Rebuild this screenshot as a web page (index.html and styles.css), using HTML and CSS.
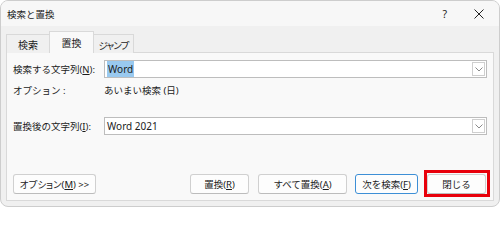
FILE: index.html
```html
<!DOCTYPE html>
<html lang="ja">
<head>
<meta charset="utf-8">
<title>検索と置換</title>
<link rel="stylesheet" href="styles.css">
</head>
<body>
<div class="window">
  <div class="titlebar">
    <span class="title">検索と置換</span>
    <span class="help">?</span>
    <span class="close">
      <svg width="10" height="10" viewBox="0 0 10 10"><path d="M0.5 0.5L9.5 9.5M9.5 0.5L0.5 9.5" stroke="#222" stroke-width="1" fill="none"/></svg>
    </span>
  </div>
  <div class="body">
    <div class="tabs">
      <div class="tab t1">検索</div>
      <div class="tab t2 active">置換</div>
      <div class="tab t3"><span class="prop tight">ジャンプ</span></div>
    </div>
    <div class="panel">
      <div class="row r1">
        <label class="lbl">検索する文字列(<u>N</u>):</label>
        <div class="combo">
          <span class="value"><span class="sel">Word</span></span>
          <span class="drop"><svg width="8" height="5" viewBox="0 0 8 5"><path d="M0.5 0.5L4 4L7.5 0.5" stroke="#8a8a8a" stroke-width="1" fill="none"/></svg></span>
        </div>
      </div>
      <div class="row r-opt">
        <span class="lbl">オプション :</span>
        <span class="optval">あいまい検索 (日)</span>
      </div>
      <div class="row r2">
        <label class="lbl">置換後の文字列(<u>I</u>):</label>
        <div class="combo">
          <span class="value">Word 2021</span>
          <span class="drop"><svg width="8" height="5" viewBox="0 0 8 5"><path d="M0.5 0.5L4 4L7.5 0.5" stroke="#8a8a8a" stroke-width="1" fill="none"/></svg></span>
        </div>
      </div>
      <div class="buttons">
        <button class="btn b-opt"><span class="prop">オプション</span>(<u>M</u>) &gt;&gt;</button>
        <div class="spacer"></div>
        <button class="btn b-rep">置換(<u>R</u>)</button>
        <button class="btn b-all">すべて置換(<u>A</u>)</button>
        <button class="btn b-next">次を検索(<u>F</u>)</button>
        <button class="btn b-close">閉じる</button>
      </div>
    </div>
  </div>
</div>
</body>
</html>
```
FILE: styles.css
```css
html, body {
  margin: 0;
  padding: 0;
  background: #ffffff;
}
body {
  font-family: "Noto Sans", "Noto Sans CJK JP", sans-serif;
  font-size: 9.5px;
  color: #1b1b1b;
  width: 500px;
  height: 209px;
  overflow: hidden;
}
.window {
  box-sizing: border-box;
  width: 500px;
  height: 207px;
  border: 1px solid #cdcdcd;
  border-radius: 8px;
  background: #f0f0f0;
  overflow: hidden;
  display: flex;
  flex-direction: column;
}
.titlebar {
  height: 24px;
  background: #f7f7f7;
  display: flex;
  align-items: center;
  padding-left: 6px;
  padding-top: 1px;
  flex: none;
}
.title {
  flex: 1;
  font-size: 9.5px;
}
.help {
  font-size: 10.5px;
  margin-right: 27px;
  color: #222;
}
.close {
  display: flex;
  margin-right: 15px;
}
.body {
  flex: 1;
  display: flex;
  flex-direction: column;
  padding: 0 5px 0 5px;
}
.tabs {
  display: flex;
  align-items: flex-end;
  height: 27px;
  position: relative;
  z-index: 2;
  margin-bottom: -1px;
  flex: none;
}
.tab {
  box-sizing: border-box;
  height: 19px;
  border: 1px solid #d9d9d9;
  border-bottom: none;
  background: #f0f0f0;
  display: flex;
  align-items: center;
  justify-content: center;
  padding-top: 1px;
  font-size: 10px;
}
.prop {
  font-feature-settings: "palt";
}
.tight {
  letter-spacing: -0.8px;
}
.t1 { width: 43px; border-right: none; }
.t2 { width: 45px; }
.t3 { width: 40px; border-left: none; font-size: 9.5px; }
.tab.active {
  height: 22px;
  background: #f9f9f9;
  padding-bottom: 2px;
}
.panel {
  box-sizing: border-box;
  height: 149px;
  flex: none;
  border: 1px solid #d9d9d9;
  background: #f9f9f9;
  padding: 7px 6px 6px 6px;
  display: flex;
  flex-direction: column;
}
.row {
  display: flex;
  align-items: center;
}
.lbl {
  width: 91px;
  flex: none;
}
.combo {
  box-sizing: border-box;
  flex: 1;
  height: 18px;
  border: 1px solid #bdbdbd;
  background: #ffffff;
  display: flex;
  align-items: center;
  padding: 0 1px 0 1px;
}
.value {
  flex: 1;
  padding-left: 1px;
  font-size: 10px;
}
.sel {
  background: #99c9ef;
  padding: 1px 1px;
}
.drop {
  box-sizing: border-box;
  width: 13px;
  height: 14px;
  border: 1px solid #cfcfcf;
  display: flex;
  align-items: center;
  justify-content: center;
  background: #ffffff;
}
.r-opt {
  height: 22px;
  margin-top: 1px;
}
.r2 {
  margin-top: 16px;
}
.buttons {
  margin-top: auto;
  display: flex;
  align-items: center;
}
.spacer { flex: 1; }
.btn {
  box-sizing: border-box;
  height: 20px;
  font-family: inherit;
  font-size: 9.5px;
  color: #1b1b1b;
  background: #fdfdfd;
  border: 1px solid #d0d0d0;
  border-bottom-color: #bcbcbc;
  border-radius: 3px;
  padding: 0;
  margin: 0;
  display: flex;
  align-items: center;
  justify-content: center;
}
.b-opt { width: 83px; }
.b-rep { width: 59px; }
.b-all { width: 89px; margin-left: 9px; }
.b-next { width: 63px; margin-left: 8px; border: 1px solid #3d8fd6; }
.b-close {
  width: 59px;
  margin-left: 9px;
  margin-right: 1px;
  position: relative;
}
.b-close::after {
  content: "";
  position: absolute;
  left: -4px;
  right: -5px;
  top: -5px;
  bottom: -4px;
  border: 3px solid #e8000b;
}
u {
  text-decoration: underline;
  text-underline-offset: 1px;
}
```
